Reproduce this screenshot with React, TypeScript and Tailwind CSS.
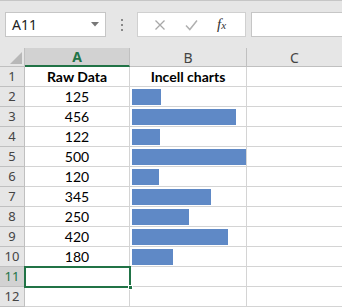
import React from "react";

const values = [125, 456, 122, 500, 120, 345, 250, 420, 180];

const cellFont = { fontFamily: "Lato, 'Liberation Sans', sans-serif" };
const uiFont = { fontFamily: "'Noto Sans', 'Open Sans', sans-serif" };

function RowHead({ n, active }: { n: number; active?: boolean }) {
  return (
    <div
      className={`w-[25px] shrink-0 border-r border-b border-[#c0c0c0] flex items-center justify-center text-[13px] ${
        active ? "bg-[#d2d2d2] text-[#217346]" : "bg-[#e6e6e6] text-[#444]"
      }`}
      style={uiFont}
    >
      {n}
    </div>
  );
}

export default function App() {
  return (
    <div className="w-[342px] h-[308px] overflow-hidden bg-white relative">
      {/* formula bar */}
      <div className="h-[48px] bg-[#e6e6e6] border-t border-[#c6c6c6] flex items-start pt-[11px] pl-[5px]">
        <div className="w-[101px] h-[25px] bg-white border border-[#c6c6c6] flex items-center justify-between pl-[6px] pr-[6px]">
          <span className="text-[14px] text-[#222]" style={uiFont}>
            A11
          </span>
          <svg width="8" height="5" viewBox="0 0 8 5">
            <path d="M0 0h8L4 4.5z" fill="#777" />
          </svg>
        </div>
        <div className="w-[31px] h-[25px] flex flex-col items-center justify-center gap-[3px]">
          <span className="w-[2px] h-[2px] bg-[#888]" />
          <span className="w-[2px] h-[2px] bg-[#888]" />
          <span className="w-[2px] h-[2px] bg-[#888]" />
        </div>
        <div className="w-[109px] h-[25px] bg-white border border-[#d0d0d0] flex items-center">
          <svg width="12" height="12" viewBox="0 0 12 12" className="ml-[16px]">
            <path d="M1.5 1.5l9 9M10.5 1.5l-9 9" stroke="#a8a8a8" strokeWidth="1.3" />
          </svg>
          <svg width="13" height="12" viewBox="0 0 13 12" className="ml-[19px]">
            <path d="M1 6.5l3.8 4L12 1.5" stroke="#b0b0b0" strokeWidth="1.5" fill="none" />
          </svg>
          <span
            className="ml-[19px] text-[15px] italic text-[#333]"
            style={{ fontFamily: "'Liberation Serif', serif" }}
          >
            f<span className="text-[11px]">x</span>
          </span>
        </div>
        <div className="ml-[5px] flex-1 h-[25px] bg-white border border-[#c6c6c6] border-r-0" />
      </div>

      {/* column headers */}
      <div className="flex h-[19px]">
        <div className="w-[25px] shrink-0 bg-[#e6e6e6] border-r border-b border-[#c0c0c0] relative">
          <svg width="12" height="12" viewBox="0 0 12 12" className="absolute left-[10px] top-[4px]">
            <path d="M12 0v12H0z" fill="#b8b8b8" />
          </svg>
        </div>
        <div
          className="w-[105px] shrink-0 bg-[#d2d2d2] border-r border-[#c0c0c0] border-b-2 border-b-[#217346] flex items-center justify-center text-[14px] font-bold text-[#217346]"
          style={uiFont}
        >
          A
        </div>
        <div
          className="w-[117px] shrink-0 bg-[#e6e6e6] border-r border-b border-[#c0c0c0] flex items-center justify-center text-[14px] text-[#444]"
          style={uiFont}
        >
          B
        </div>
        <div
          className="flex-1 bg-[#e6e6e6] border-b border-[#c0c0c0] flex items-center justify-center text-[14px] text-[#444]"
          style={uiFont}
        >
          C
        </div>
      </div>

      {/* row 1 */}
      <div className="flex h-[20px]">
        <RowHead n={1} />
        <div
          className="w-[105px] shrink-0 border-r border-b border-[#d4d4d4] flex items-center justify-center text-[14px] font-bold text-black"
          style={cellFont}
        >
          Raw Data
        </div>
        <div
          className="w-[117px] shrink-0 border-r border-b border-[#d4d4d4] flex items-center justify-center text-[14px] font-bold text-black"
          style={cellFont}
        >
          Incell charts
        </div>
        <div className="flex-1 border-b border-[#d4d4d4]" />
      </div>

      {values.map((v, i) => (
        <div key={i} className="flex h-[20px]">
          <RowHead n={i + 2} />
          <div
            className="w-[105px] shrink-0 border-r border-b border-[#d4d4d4] flex items-center justify-center text-[14px] text-black"
            style={cellFont}
          >
            {v}
          </div>
          <div className="w-[117px] shrink-0 border-r border-b border-[#d4d4d4] flex items-center pl-[2px]">
            <div className="h-[16px] bg-[#5f89c6]" style={{ width: Math.round((v / 500) * 114) }} />
          </div>
          <div className="flex-1 border-b border-[#d4d4d4]" />
        </div>
      ))}

      {/* row 11 (selected) */}
      <div className="flex h-[20px]">
        <RowHead n={11} active />
        <div className="w-[105px] shrink-0 border-r border-b border-[#d4d4d4] relative">
          <div className="absolute left-[-1px] top-[-1px] right-[-2px] bottom-[-2px] border-2 border-[#217346]" />
          <div className="absolute right-[-4px] bottom-[-4px] w-[5px] h-[5px] bg-[#217346] border border-white" />
        </div>
        <div className="w-[117px] shrink-0 border-r border-b border-[#d4d4d4]" />
        <div className="flex-1 border-b border-[#d4d4d4]" />
      </div>

      {/* row 12 */}
      <div className="flex h-[20px]">
        <RowHead n={12} />
        <div className="w-[105px] shrink-0 border-r border-b border-[#d4d4d4]" />
        <div className="w-[117px] shrink-0 border-r border-b border-[#d4d4d4]" />
        <div className="flex-1 border-b border-[#d4d4d4]" />
      </div>
    </div>
  );
}
